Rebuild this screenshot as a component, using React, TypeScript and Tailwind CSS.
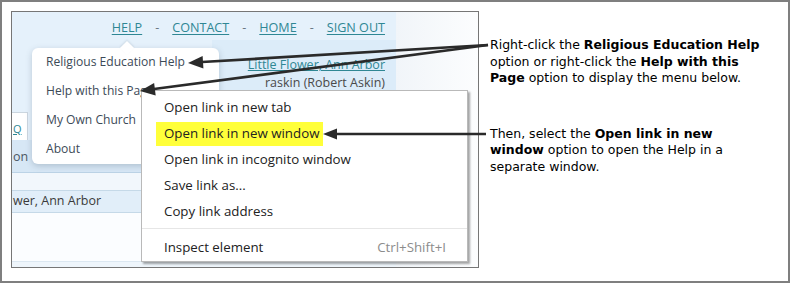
const ui = { fontFamily: '"Open Sans", "Noto Sans", sans-serif' }

function NavLink({ label }: { label: string }) {
  return <span className="text-[#2f8794] underline underline-offset-2">{label}</span>
}

function Dash() {
  return <span className="mx-[13px] text-[#6b7884]">-</span>
}

function DropdownMenu() {
  const items = ['Religious Education Help', 'Help with this Page', 'My Own Church', 'About']
  return (
    <div className="absolute left-[20px] top-[36px] w-[187px] rounded-md bg-white shadow-[0_2px_6px_rgba(60,80,100,0.25)]">
      <div className="absolute -top-[5px] left-[90px] h-[10px] w-[10px] rotate-45 bg-white shadow-[-1px_-1px_2px_rgba(60,80,100,0.12)]" />
      <ul className="relative">
        {items.map((item) => (
          <li key={item} className="flex h-[29px] items-center pl-[14px] text-[12.1px] text-[#3c4a57]">
            {item}
          </li>
        ))}
      </ul>
    </div>
  )
}

function ContextMenu() {
  const items = ['Open link in new tab', 'Open link in new window', 'Open link in incognito window', 'Save link as...', 'Copy link address']
  return (
    <div className="absolute left-[129px] top-[78px] w-[327px] border border-[#b9b9b9] bg-white pt-[4px] shadow-[2px_2px_2px_rgba(0,0,0,0.35)]">
      {items.map((item) => (
        <div key={item} className="flex h-[26px] items-center pl-[22px] text-[13.3px] text-[#222]">
          {item === 'Open link in new window' ? (
            <span className="-ml-[8px] flex h-[24px] items-center bg-[#ffff3a] pl-[8px] pr-[4px]">{item}</span>
          ) : (
            item
          )}
        </div>
      ))}
      <div className="mt-[3px] mb-[6px] h-px bg-[#e6e6e6]" />
      <div className="flex h-[26px] items-center justify-between pl-[22px] pr-[21px] text-[13.3px] text-[#222]">
        <span>Inspect element</span>
        <span className="text-[#8c8c8c]">Ctrl+Shift+I</span>
      </div>
    </div>
  )
}

function Screenshot() {
  return (
    <div className="relative flex h-[257px] w-[468px] overflow-hidden border border-[#767676]" style={ui}>
      {/* page column */}
      <div className="flex w-[384px] flex-col bg-[#e5f1fb]">
        <div className="flex h-[26px] items-end justify-end pr-[11px] text-[12.6px]">
          <NavLink label="HELP" />
          <Dash />
          <NavLink label="CONTACT" />
          <Dash />
          <NavLink label="HOME" />
          <Dash />
          <NavLink label="SIGN OUT" />
        </div>
        <div className="mt-[2px] ml-auto flex h-[58px] w-[184px] flex-col items-end bg-[#dcecf9] pt-[16px] pr-[11px] text-[12.5px] leading-[18px]">
          <span className="text-[#2f8794] underline">Little Flower, Ann Arbor</span>
          <span className="text-[#4a4a4a]">raskin (Robert Askin)</span>
        </div>
        <div className="mt-[14px] flex h-[28px]">
          <div className="flex w-[16px] items-end border-t border-r border-[#cbd6df] bg-white pb-[3px] pl-[1px] text-[11px] text-[#2f8794] underline">
            <span>Q</span>
          </div>
        </div>
        <div className="flex h-[32px] items-end bg-[#d7e7f5] pb-[5px] pl-[1px] text-[12.5px] text-[#4d5864]">
          <span>on</span>
        </div>
        <div className="h-[18px] border-t border-[#bcd3e6] bg-[#f2f7fc]" />
        <div className="flex h-[23px] items-center border-y border-[#c5d9e8] bg-[#e1eef9] pl-[1px] text-[12.5px] text-[#3a3a3a]">
          <span>wer, Ann Arbor</span>
        </div>
        <div className="flex-1 bg-[#fbfdff]" />
        <div className="h-[6px] border-t border-[#dbe7f1] bg-[#eef5fb]" />
      </div>
      {/* right margin of the page */}
      <div className="flex-1 bg-gradient-to-r from-[#f1f5f9] to-[#fcfdfe]" />
      <DropdownMenu />
      <ContextMenu />
    </div>
  )
}

function Arrows() {
  return (
    <svg className="pointer-events-none absolute -left-[2px] -top-[2px]" width="790" height="283" viewBox="0 0 790 283">
      <g stroke="#2a2a2a" strokeWidth="2.7" fill="none">
        <line x1="488" y1="45" x2="202" y2="62" />
        <line x1="488" y1="45" x2="154" y2="89" />
        <line x1="486" y1="134" x2="336" y2="134" />
      </g>
      <g fill="#2a2a2a">
        <polygon points="188,63 203.4,68.5 202.6,56" />
        <polygon points="140,91 155.7,95.5 154.1,83" />
        <polygon points="323,134 337,128.5 337,139.5" />
      </g>
    </svg>
  )
}

export default function App() {
  return (
    <div className="relative flex h-[283px] w-[790px] border-2 border-[#7f7f7f] bg-white">
      <div className="pl-[9px] pt-[9px]">
        <Screenshot />
      </div>
      <div
        className="flex flex-col pl-[11px] pt-[35px] text-[12.5px] leading-[16.5px] text-black"
        style={{ fontFamily: '"DejaVu Sans", Verdana, sans-serif' }}
      >
        <p>
          Right-click the <b>Religious Education Help</b>
          <br />
          option or right-click the <b>Help with this</b>
          <br />
          <b>Page</b> option to display the menu below.
        </p>
        <p className="mt-[39px]">
          Then, select the <b>Open link in new</b>
          <br />
          <b>window</b> option to open the Help in a
          <br />
          separate window.
        </p>
      </div>
      <Arrows />
    </div>
  )
}
